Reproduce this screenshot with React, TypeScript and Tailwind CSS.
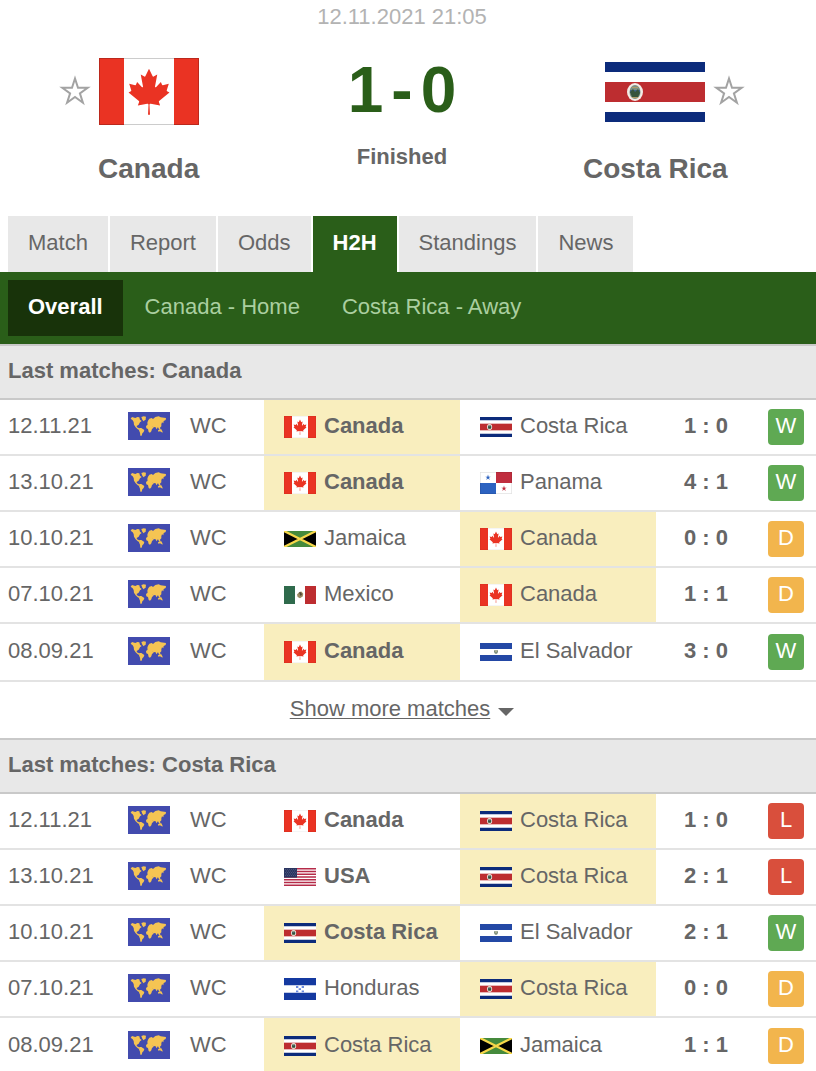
import type { ReactNode } from "react";

type Country =
  | "Canada"
  | "Costa Rica"
  | "Panama"
  | "Jamaica"
  | "Mexico"
  | "El Salvador"
  | "USA"
  | "Honduras";

type Match = {
  date: string;
  home: Country;
  away: Country;
  score: string;
  winner?: "home" | "away";
  result: "W" | "D" | "L";
};

const canadaMatches: Match[] = [
  { date: "12.11.21", home: "Canada", away: "Costa Rica", score: "1 : 0", winner: "home", result: "W" },
  { date: "13.10.21", home: "Canada", away: "Panama", score: "4 : 1", winner: "home", result: "W" },
  { date: "10.10.21", home: "Jamaica", away: "Canada", score: "0 : 0", result: "D" },
  { date: "07.10.21", home: "Mexico", away: "Canada", score: "1 : 1", result: "D" },
  { date: "08.09.21", home: "Canada", away: "El Salvador", score: "3 : 0", winner: "home", result: "W" },
];

const costaRicaMatches: Match[] = [
  { date: "12.11.21", home: "Canada", away: "Costa Rica", score: "1 : 0", winner: "home", result: "L" },
  { date: "13.10.21", home: "USA", away: "Costa Rica", score: "2 : 1", winner: "home", result: "L" },
  { date: "10.10.21", home: "Costa Rica", away: "El Salvador", score: "2 : 1", winner: "home", result: "W" },
  { date: "07.10.21", home: "Honduras", away: "Costa Rica", score: "0 : 0", result: "D" },
  { date: "08.09.21", home: "Costa Rica", away: "Jamaica", score: "1 : 1", result: "D" },
];

const tabs = ["Match", "Report", "Odds", "H2H", "Standings", "News"];
const filters = ["Overall", "Canada - Home", "Costa Rica - Away"];

const resultColors = {
  W: "bg-[#5fa953]",
  D: "bg-[#f2b54d]",
  L: "bg-[#d94f3c]",
};

const flagHeights: Record<Country, string> = {
  Canada: "h-[22px]",
  "Costa Rica": "h-5",
  Panama: "h-[22px]",
  Jamaica: "h-4",
  Mexico: "h-[18px]",
  "El Salvador": "h-[18px]",
  USA: "h-[18px]",
  Honduras: "h-[22px]",
};

// every flag is drawn on a 96 x 60 field, except where noted
const flagArt: Record<Country, ReactNode> = {
  // 100 x 67
  Canada: (
    <>
      <path fill="#fff" d="M0 0h100v67H0z" />
      <path fill="#ea3323" d="M0 0h25v67H0zM75 0h25v67H75z" />
      <path
        fill="#ea3323"
        transform="translate(-2.8 6.3) scale(0.011 0.0114)"
        d="M4890 4430l-45-863a95 95 0 0 1 111-98l859 151-116-320a65 65 0 0 1 20-73l941-762-212-99a65 65 0 0 1-34-79l186-572-542 115a65 65 0 0 1-73-38l-105-247-423 454a65 65 0 0 1-111-57l204-1052-327 189a65 65 0 0 1-91-27l-332-652-332 652a65 65 0 0 1-91 27l-327-189 204 1052a65 65 0 0 1-111 57l-423-454-105 247a65 65 0 0 1-73 38l-542-115 186 572a65 65 0 0 1-34 79l-212 99 941 762a65 65 0 0 1 20 73l-116 320 859-151a95 95 0 0 1 111 98l-45 863z"
      />
      <path fill="none" stroke="#000" strokeOpacity=".2" d="M.5.5h99v66H.5z" />
    </>
  ),
  // 100 x 60
  "Costa Rica": (
    <>
      <path fill="#fff" d="M0 0h100v60H0z" />
      <path fill="#0c2b7b" d="M0 0h100v10H0zM0 50h100v10H0z" />
      <path fill="#bd2d30" d="M0 20h100v20H0z" />
      <ellipse cx="30" cy="30" rx="8" ry="9" fill="#f3ece6" />
      <ellipse cx="30" cy="30" rx="5.5" ry="7" fill="#7c9085" />
      <path fill="#41658c" d="M25 28h10v3H25z" />
      <path fill="#35543c" d="M25 30l3-3 2 3 3-3 2 4-2 4h-6z" />
      <path fill="#b09b68" d="M27 25h6v1h-6zM27 35h6v1h-6z" />
    </>
  ),
  Panama: (
    <>
      <path fill="#fff" d="M0 0h96v60H0z" />
      <path fill="#c02d3e" d="M48 0h48v30H48z" />
      <path fill="#2c62c0" d="M0 30h48v30H0z" />
      <path fill="#2c62c0" d="M24 7l2 6h6l-5 3 2 6-5-4-5 4 2-6-5-3h6z" />
      <path fill="#c02d3e" d="M72 37l2 6h6l-5 3 2 6-5-4-5 4 2-6-5-3h6z" />
      <path fill="none" stroke="#000" strokeOpacity=".15" strokeWidth="2" d="M1 1h94v58H1z" />
    </>
  ),
  Jamaica: (
    <>
      <path fill="#000" d="M0 0h96v60H0z" />
      <path fill="#458a3c" d="M0 0h96L48 30zM0 60h96L48 30z" />
      <path stroke="#f7d84a" strokeWidth="8" d="M0 0l96 60M96 0L0 60" />
    </>
  ),
  Mexico: (
    <>
      <path fill="#fff" d="M0 0h96v60H0z" />
      <path fill="#2f6a4c" d="M0 0h33v60H0z" />
      <path fill="#bd2d30" d="M63 0h33v60H63z" />
      <path fill="#9b8a62" d="M39 28l7-8 6-2 6 8-2 9-8 6-7-4z" />
      <path fill="#4c4636" d="M45 22l6-1 3 7-4 5z" />
    </>
  ),
  "El Salvador": (
    <>
      <path fill="#fff" d="M0 0h96v60H0z" />
      <path fill="#2348a5" d="M0 0h96v20H0zM0 40h96v20H0z" />
      <path fill="#7f9080" d="M42 24h12v6l-3 6h-6l-3-6z" />
      <path fill="#c4bf94" d="M46 25h4v5h-4z" />
    </>
  ),
  USA: (
    <>
      <path fill="#fff" d="M0 0h96v60H0z" />
      <path
        stroke="#b52b49"
        strokeWidth="4.6"
        d="M0 2.3h96M0 11.5h96M0 20.8h96M0 30h96M0 39.2h96M0 48.5h96M0 57.7h96"
      />
      <path fill="#2b3560" d="M0 0h39v32H0z" />
      <path
        stroke="#7581a4"
        strokeWidth="2"
        strokeDasharray="2 4"
        d="M3 5h34M6 10h31M3 15h34M6 20h31M3 25h34"
      />
    </>
  ),
  Honduras: (
    <>
      <path fill="#fff" d="M0 0h96v60H0z" />
      <path fill="#1439a0" d="M0 0h96v20H0zM0 40h96v20H0z" />
      <path
        fill="#6b8add"
        d="M36 22h7v5h-7zM53 22h7v5h-7zM44 28h7v5h-7zM36 34h7v5h-7zM53 34h7v5h-7z"
      />
    </>
  ),
};

const flagBoxes: Partial<Record<Country, string>> = {
  Canada: "0 0 100 67",
  "Costa Rica": "0 0 100 60",
};

function Flag({ country, className }: { country: Country; className: string }) {
  return (
    <svg
      viewBox={flagBoxes[country] ?? "0 0 96 60"}
      preserveAspectRatio="none"
      className={`shrink-0 ${className}`}
      aria-hidden="true"
    >
      {flagArt[country]}
    </svg>
  );
}

function WorldIcon() {
  return (
    <svg viewBox="0 0 126 84" className="block h-7 w-[42px]" role="img" aria-label="World">
      <path fill="#424bae" d="M0 0h126v84H0z" />
      <g fill="#f5c453">
        <path d="M8 20l4-5 10 3 6-3 6 1 2 7 5 4-5 4-4 7-6 4 1 4 5 2 4 4-5 1-8-7-5-8-1-8-3-5z" />
        <path d="M40 15l7-2 7 1-1 8-6 6-4-5z" />
        <path d="M34 48l6 0 9 6-2 6-4 4-2 7-4 0-1-9-3-7z" />
        <path d="M58 32l2-6 4-6 7-2 4 3 7-6 10-2 6 3 16 2-1 6-6 3-1 7-4-3-2 6 0 6-4 4 1 6-4-2-3-6-4 7-4-7-6 1-4-4-7 2-6-4z" />
        <path d="M54 42l5-4 8 0 6 3 4 6-5 4-2 7-4 4-4-2-2-9-5-2z" />
        <path d="M90 55l5-3 5 0 4 7-3 2-5-3-5 1zM91 46l6 3-1 2-5-3zM101 60l3 1-1 2z" />
      </g>
    </svg>
  );
}

function StarButton({ label }: { label: string }) {
  return (
    <button type="button" aria-label={label} className="block">
      <svg viewBox="0 0 32 34" className="block h-[34px] w-8" fill="none" stroke="#a3a3a3" strokeWidth="2" strokeMiterlimit="10">
        <path d="M16 3.500l3 9.200h9.700l-7.800 5.700 3 9.300L16 22l-7.900 5.700 3-9.300-7.800-5.700H13z" />
      </svg>
    </button>
  );
}

function Team({ country, starSide, flagClass }: { country: Country; starSide: "left" | "right"; flagClass: string }) {
  return (
    <div>
      <div className="grid h-[67px] grid-cols-[1fr_100px_1fr] items-center gap-2">
        <div className="flex justify-end">
          {starSide === "left" && <StarButton label={`Add ${country} to favourites`} />}
        </div>
        <Flag country={country} className={flagClass} />
        <div>{starSide === "right" && <StarButton label={`Add ${country} to favourites`} />}</div>
      </div>
      <h2 className="mt-7 text-center text-[28px] leading-8 font-bold">{country}</h2>
    </div>
  );
}

function TeamCell({ country, bold, highlight }: { country: Country; bold: boolean; highlight: boolean }) {
  return (
    <td className={`p-0 pl-5 ${highlight ? "bg-[#f9eebe]" : ""}`}>
      <div className="flex items-center gap-2">
        <Flag country={country} className={`w-8 ${flagHeights[country]}`} />
        <span className={`pb-0.5 whitespace-nowrap ${bold ? "font-bold" : ""}`}>{country}</span>
      </div>
    </td>
  );
}

function MatchTable({ team, matches, lastRow }: { team: Country; matches: Match[]; lastRow: string }) {
  return (
    <section>
      <h3 className="flex h-14 items-center border-y-2 border-[#c9c9c9] bg-[#e8e8e8] px-2 pb-0.5 font-bold">
        Last matches: {team}
      </h3>
      <table className="w-full table-fixed border-separate border-spacing-0">
        <colgroup>
          <col className="w-32" />
          <col className="w-[62px]" />
          <col className="w-[74px]" />
          <col />
          <col />
          <col className="w-[100px]" />
          <col className="w-[60px]" />
        </colgroup>
        <tbody>
          {matches.map((match, i) => (
            <tr
              key={match.date}
              className={i === matches.length - 1 ? lastRow : "h-14 *:border-b-2 *:border-[#e3e3e3]"}
            >
              <td className="p-0 pb-0.5 pl-2">{match.date}</td>
              <td className="p-0 pb-0.5">
                <WorldIcon />
              </td>
              <td className="p-0 pb-0.5">WC</td>
              <TeamCell country={match.home} bold={match.winner === "home"} highlight={match.home === team} />
              <TeamCell country={match.away} bold={match.winner === "away"} highlight={match.away === team} />
              <td className="p-0 pb-0.5 text-center font-bold">{match.score}</td>
              <td className="p-0 pl-3">
                <span
                  className={`flex size-9 items-center justify-center rounded pb-0.5 text-white ${resultColors[match.result]}`}
                >
                  {match.result}
                </span>
              </td>
            </tr>
          ))}
        </tbody>
      </table>
    </section>
  );
}

export default function App() {
  return (
    <main className="bg-white font-['Liberation_Sans',Arial,sans-serif] text-[22px] leading-7 text-[#666]">
      <header className="pr-3 pb-[31px]">
        <p className="pt-px text-center leading-8 text-[#b3b3b3]">12.11.2021 21:05</p>
        <div className="grid grid-cols-3 px-[22px] pt-[25px]">
          <Team country="Canada" starSide="left" flagClass="h-[67px] w-full" />
          <div className="text-center font-bold">
            <p className="flex justify-center gap-2 text-[64px] leading-16 text-[#2a5e19]">
              <span>1</span>
              <span>-</span>
              <span>0</span>
            </p>
            <p className="mt-[21px]">Finished</p>
          </div>
          <Team country="Costa Rica" starSide="right" flagClass="h-[60px] w-full" />
        </div>
      </header>

      <nav className="flex gap-0.5 px-2">
        {tabs.map((tab) => (
          <a
            key={tab}
            href="#"
            className={`flex h-14 items-center px-5 pb-0.5 ${
              tab === "H2H" ? "bg-[#2a5e19] font-bold text-white" : "bg-[#e8e8e8]"
            }`}
          >
            {tab}
          </a>
        ))}
      </nav>
      <nav className="flex gap-0.5 bg-[#2a5e19] p-2">
        {filters.map((filter) => (
          <a
            key={filter}
            href="#"
            className={`flex h-14 items-center px-5 pb-0.5 whitespace-nowrap ${
              filter === "Overall" ? "bg-[#18330a] font-bold text-white" : "text-[#aacfa0]"
            }`}
          >
            {filter}
          </a>
        ))}
      </nav>

      <MatchTable
        team="Canada"
        matches={canadaMatches}
        lastRow="h-[58px] *:border-b-2 *:border-[#e3e3e3]"
      />
      <div className="flex h-14 items-center justify-center pr-3">
        <button type="button" className="flex items-center gap-2 pb-0.5">
          <span className="underline decoration-1 underline-offset-2">Show more matches</span>
          <svg viewBox="0 0 16 8" className="mt-1.5 h-2 w-4" aria-hidden="true">
            <path fill="#666" d="M0 0h16L8 8z" />
          </svg>
        </button>
      </div>
      <MatchTable team="Costa Rica" matches={costaRicaMatches} lastRow="h-[53px] *:pt-0.5" />
    </main>
  );
}
